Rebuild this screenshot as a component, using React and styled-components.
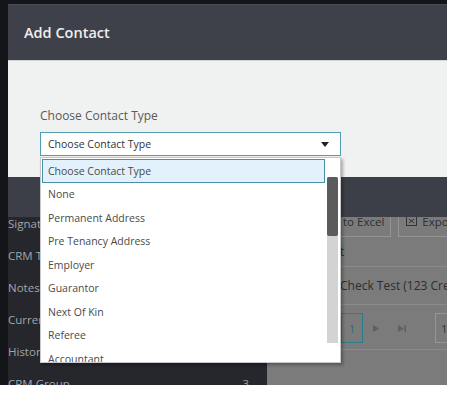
import React from "react";
import styled, { createGlobalStyle } from "styled-components";

const GlobalStyle = createGlobalStyle`
  html, body { margin: 0; padding: 0; background: #ffffff; }
  body { font-family: "Open Sans", "Noto Sans", sans-serif; }
  * { box-sizing: border-box; }
`;

const Frame = styled.div`
  width: 447px;
  height: 385px;
  background: #141518;
  padding: 4px 0 0 8px;
  display: flex;
  flex-direction: column;
  overflow: hidden;
`;

const Modal = styled.section`
  flex: none;
  display: flex;
  flex-direction: column;
  position: relative;
  z-index: 3;
`;

const ModalHeader = styled.header`
  height: 56px;
  background: #3e4149;
  border-top: 1px solid #4b4e56;
  display: flex;
  align-items: center;
  padding-left: 16px;
  color: #eeeeee;
  font: 600 14.5px "Open Sans", sans-serif;
`;

const ModalBody = styled.div`
  height: 117px;
  background: #f0f1f1;
  border-top: 1px solid #d3d6d6;
  padding: 47px 0 0 32px;
`;

const Label = styled.div`
  font: 400 12px/16px "Open Sans", sans-serif;
  color: #5a5a5a;
  margin-bottom: 8px;
`;

const SelectWrap = styled.div`
  position: relative;
  width: 301px;
`;

const SelectBox = styled.div`
  height: 24px;
  border: 1px solid #4f9cb3;
  background: #ffffff;
  display: flex;
  align-items: center;
  justify-content: space-between;
  padding: 0 11px 0 7px;
  font: 400 10.5px "Open Sans", sans-serif;
  color: #333333;
`;

const Dropdown = styled.div`
  position: absolute;
  top: calc(100% + 1px);
  left: 0;
  width: 301px;
  height: 206px;
  background: #ffffff;
  border: 1px solid #c8c8c8;
  box-shadow: 2px 2px 3px rgba(0, 0, 0, 0.3);
  display: flex;
  padding: 1px 2px 0 1px;
`;

const OptionList = styled.ul`
  list-style: none;
  margin: 0;
  padding: 0;
  width: 283px;
  flex: none;
  overflow: hidden;
  display: flex;
  flex-direction: column;
`;

const Option = styled.li`
  flex: none;
  height: 23.5px;
  display: flex;
  align-items: center;
  padding-left: 5px;
  font: 400 10.5px "Open Sans", sans-serif;
  color: #4a4a4a;
  white-space: nowrap;
  border: 1px solid ${(p) => (p.$active ? "#4b8fa6" : "transparent")};
  background: ${(p) => (p.$active ? "#e2f1fb" : "transparent")};
`;

const Scrollbar = styled.div`
  width: 11px;
  margin: 18px 0 19px 2px;
  background: #d3d3d3;
  display: flex;
  flex-direction: column;
`;

const Thumb = styled.div`
  height: 59px;
  background: #5b5b5b;
  border-radius: 2px;
`;

const Backdrop = styled.div`
  flex: 1;
  display: flex;
  position: relative;
`;

const Band = styled.div`
  position: absolute;
  top: 0;
  left: 0;
  right: 0;
  height: 40px;
  background: #3c3f47;
  z-index: 1;
`;

const Sidebar = styled.nav`
  width: 259px;
  flex: none;
  background: #25272d;
  padding-top: 30px;
  display: flex;
  flex-direction: column;
`;

const SideItem = styled.div`
  height: 32px;
  flex: none;
  display: flex;
  align-items: center;
  justify-content: space-between;
  padding-right: 18px;
  font: 400 11.5px "Open Sans", sans-serif;
  color: #a2a5ab;
  white-space: nowrap;
`;

const Content = styled.div`
  flex: 1;
  background: #7b7b7b;
  padding: 28px 0 0 74px;
  display: flex;
  flex-direction: column;
  overflow: hidden;
`;

const Toolbar = styled.div`
  display: flex;
  gap: 7px;
  height: 32px;
  flex: none;
`;

const ToolButton = styled.div`
  height: 32px;
  border: 1px solid #949494;
  display: flex;
  align-items: center;
  gap: 5px;
  padding: ${(p) => (p.$first ? "0 6px 0 13px" : "0 6px 0 7px")};
  margin-left: ${(p) => (p.$first ? "-12px" : "0")};
  font: 400 11.5px "Open Sans", sans-serif;
  color: #2e2e2e;
  white-space: nowrap;
  flex: none;
`;

const Row = styled.div`
  height: ${(p) => p.$h}px;
  flex: none;
  display: flex;
  align-items: center;
  border-bottom: 1px solid #8b8b8b;
  font: 400 12px "Open Sans", sans-serif;
  color: #2d2d2d;
  white-space: nowrap;
  margin-left: -1px;
`;

const Pager = styled.div`
  height: 45px;
  flex: none;
  display: flex;
  align-items: flex-start;
  padding-top: 8px;
  border-bottom: 1px solid #8b8b8b;
`;

const PageBox = styled.div`
  width: ${(p) => p.$w}px;
  height: 30px;
  flex: none;
  border: 1px solid ${(p) => (p.$current ? "#2b7b8d" : "#959595")};
  display: flex;
  align-items: center;
  justify-content: ${(p) => (p.$current ? "center" : "flex-start")};
  padding-left: ${(p) => (p.$current ? "0" : "5px")};
  font: 400 11.5px "Open Sans", sans-serif;
  color: ${(p) => (p.$current ? "#2e6c7c" : "#333333")};
`;

const PagerIcon = styled.div`
  width: ${(p) => p.$w}px;
  height: 30px;
  flex: none;
  display: flex;
  align-items: center;
  justify-content: center;
`;

const options = [
  "Choose Contact Type",
  "None",
  "Permanent Address",
  "Pre Tenancy Address",
  "Employer",
  "Guarantor",
  "Next Of Kin",
  "Referee",
  "Accountant",
];

const sideItems = [
  ["Signatures", ""],
  ["CRM Tasks", ""],
  ["Notes", ""],
  ["Current Tenancy", ""],
  ["History", ""],
  ["CRM Group", "3"],
];

export default function App() {
  return (
    <>
      <GlobalStyle />
      <Frame>
        <Modal>
          <ModalHeader>Add Contact</ModalHeader>
          <ModalBody>
            <Label>Choose Contact Type</Label>
            <SelectWrap>
              <SelectBox>
                <span>Choose Contact Type</span>
                <svg width="8" height="5" viewBox="0 0 8 5">
                  <path d="M0 0 H8 L4 5 Z" fill="#222" />
                </svg>
              </SelectBox>
              <Dropdown>
                <OptionList>
                  {options.map((o, i) => (
                    <Option key={o} $active={i === 0}>
                      {o}
                    </Option>
                  ))}
                </OptionList>
                <Scrollbar>
                  <Thumb />
                </Scrollbar>
              </Dropdown>
            </SelectWrap>
          </ModalBody>
        </Modal>
        <Backdrop>
          <Band />
          <Sidebar>
            {sideItems.map(([t, n]) => (
              <SideItem key={t}>
                <span>{t}</span>
                <span>{n}</span>
              </SideItem>
            ))}
          </Sidebar>
          <Content>
            <Toolbar>
              <ToolButton $first>to Excel</ToolButton>
              <ToolButton>
                <svg width="11" height="10" viewBox="0 0 11 10">
                  <rect x="0.5" y="0.5" width="10" height="9" fill="none" stroke="#333" />
                  <path d="M3 3 L8 7 M8 3 L3 7" stroke="#333" />
                </svg>
                Export
              </ToolButton>
            </Toolbar>
            <Row $h={30}>t</Row>
            <Row $h={38}>Check Test (123 Credit)</Row>
            <Pager>
              <PageBox $w={22} $current>1</PageBox>
              <PagerIcon $w={26}>
                <svg width="6" height="7" viewBox="0 0 6 7">
                  <path d="M0 0 L6 3.5 L0 7 Z" fill="#5f5f5f" />
                </svg>
              </PagerIcon>
              <PagerIcon $w={26}>
                <svg width="8" height="7" viewBox="0 0 8 7">
                  <path d="M0 0 L6 3.5 L0 7 Z" fill="#5f5f5f" />
                  <rect x="6.5" y="0" width="1.5" height="7" fill="#5f5f5f" />
                </svg>
              </PagerIcon>
              <PagerIcon $w={20} />
              <PageBox $w={30}>1</PageBox>
            </Pager>
          </Content>
        </Backdrop>
      </Frame>
    </>
  );
}
